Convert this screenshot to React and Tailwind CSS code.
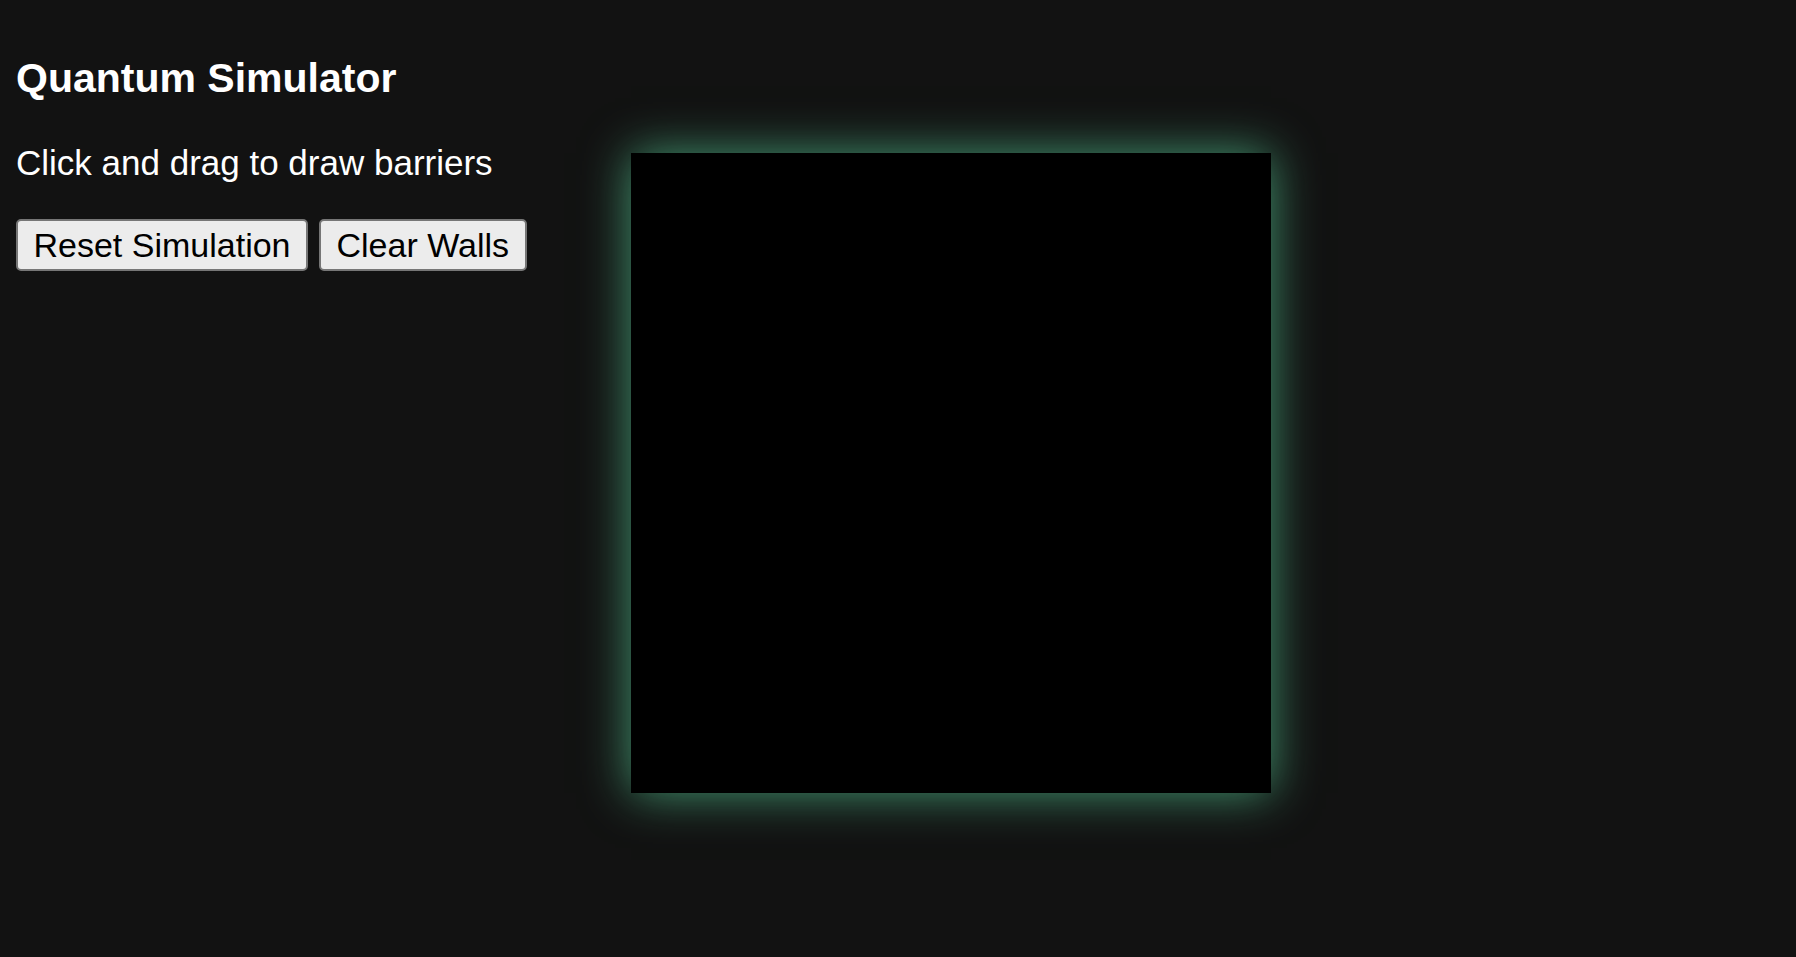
import React from "react";

export default function App() {
  return (
    <div
      className="min-h-[957px] w-full bg-[#121212] text-white flex items-start"
      style={{ fontFamily: '"Liberation Sans", Arial, sans-serif' }}
    >
      {/* controls */}
      <div className="w-[631px] shrink-0 pl-4 pt-[55px]">
        <h1 className="text-[41px] leading-[47px] font-bold">Quantum Simulator</h1>
        <p className="mt-[41px] text-[35px] leading-[40px]">Click and drag to draw barriers</p>
        <div className="mt-[36px] flex gap-[11px]">
          <button className="bg-[#ececec] text-black text-[34px] leading-[38px] px-[15.5px] py-[5px] border-2 border-[#767676] rounded-[5px]">
            Reset Simulation
          </button>
          <button className="bg-[#ececec] text-black text-[34px] leading-[38px] px-[15.5px] py-[5px] border-2 border-[#767676] rounded-[5px]">
            Clear Walls
          </button>
        </div>
      </div>

      {/* simulation canvas */}
      <div className="mt-[153px] w-[640px] h-[640px] shrink-0 bg-black shadow-[0_0_45px_rgba(76,175,130,0.85)]" />
    </div>
  );
}
